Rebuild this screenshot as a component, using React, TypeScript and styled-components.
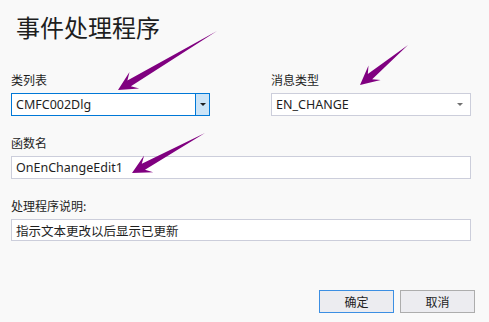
import { FC } from "react";
import styled, { createGlobalStyle } from "styled-components";

const GlobalStyle = createGlobalStyle`
  html, body {
    margin: 0;
    padding: 0;
    background-color: #f9f9f9;
  }
  body {
    font-family: "Noto Sans", "Noto Sans CJK SC", sans-serif;
    color: #1e1e1e;
  }
`;

const StyledDialog = styled.div`
  position: relative;
  width: 489px;
  height: 322px;
  box-sizing: border-box;
  padding: 11px 0 0 11px;
  overflow: hidden;
`;

const Title = styled.h1`
  margin: 0 0 29px 5px;
  font-family: "Noto Sans CJK SC", sans-serif;
  font-size: 24px;
  font-weight: 400;
  line-height: 32px;
  color: #1e1e1e;
`;

const FormGrid = styled.div`
  display: grid;
  grid-template-columns: 199px 200px;
  column-gap: 61px;
  row-gap: 19px;
  width: 460px;
`;

const Field = styled.div<{ $wide?: boolean }>`
  display: flex;
  flex-direction: column;
  gap: 5px;
  grid-column: ${(props) => (props.$wide ? "1 / -1" : "auto")};
`;

const Label = styled.label`
  font-family: "Noto Sans CJK SC", sans-serif;
  font-size: 12px;
  line-height: 16px;
  color: #1e1e1e;
`;

const Box = styled.div<{ $focused?: boolean; $height?: number }>`
  display: flex;
  align-items: stretch;
  height: ${(props) => props.$height ?? 23}px;
  box-sizing: border-box;
  border: 1px solid ${(props) => (props.$focused ? "#0078d7" : "#cccedb")};
  background-color: #ffffff;
`;

const Value = styled.span`
  flex: 1;
  display: flex;
  align-items: center;
  padding-left: 4px;
  font-family: "Noto Sans", "Noto Sans CJK SC", sans-serif;
  font-size: 12.5px;
  color: #1e1e1e;
  white-space: nowrap;
`;

const DropButton = styled.span<{ $active?: boolean }>`
  width: 13px;
  display: flex;
  align-items: center;
  justify-content: center;
  background-color: ${(props) => (props.$active ? "#cce4f7" : "transparent")};
  border-left: 1px solid ${(props) => (props.$active ? "#0078d7" : "transparent")};
  margin-right: ${(props) => (props.$active ? "0" : "4px")};
`;

const Caret = styled.span<{ $dark?: boolean }>`
  width: 0;
  height: 0;
  border-left: 3px solid transparent;
  border-right: 3px solid transparent;
  border-top: 3px solid ${(props) => (props.$dark ? "#1e1e1e" : "#717171")};
`;

const ButtonRow = styled.div`
  display: flex;
  justify-content: flex-end;
  gap: 6px;
  padding-right: 14px;
  margin-top: 49px;
`;

const Button = styled.button<{ $primary?: boolean }>`
  width: 75px;
  height: 23px;
  padding: 0;
  box-sizing: border-box;
  border: 1px solid ${(props) => (props.$primary ? "#3c8fe3" : "#adadad")};
  background-color: #ececf0;
  font-family: "Noto Sans CJK SC", sans-serif;
  font-size: 12px;
  color: #1e1e1e;
`;

const ArrowLayer = styled.svg`
  position: absolute;
  left: 0;
  top: 0;
  pointer-events: none;
`;

interface IArrowProps {
  from: [number, number];
  to: [number, number];
}

// tapered purple annotation arrow, tail is a point, head has barbs
const Arrow: FC<IArrowProps> = ({ from, to }) => {
  const dx = to[0] - from[0];
  const dy = to[1] - from[1];
  const len = Math.hypot(dx, dy);
  const ux = dx / len;
  const uy = dy / len;
  const nx = -uy;
  const ny = ux;
  const headLen = 13;
  const shaft = 3.4;
  const wing = 9.5;
  const back = 19;
  const base = [to[0] - ux * headLen, to[1] - uy * headLen];
  const wingBase = [to[0] - ux * back, to[1] - uy * back];
  const pts = [
    from,
    [base[0] + nx * shaft, base[1] + ny * shaft],
    [wingBase[0] + nx * wing, wingBase[1] + ny * wing],
    to,
    [wingBase[0] - nx * wing, wingBase[1] - ny * wing],
    [base[0] - nx * shaft, base[1] - ny * shaft],
  ]
    .map((p) => `${p[0].toFixed(1)},${p[1].toFixed(1)}`)
    .join(" ");

  return <polygon points={pts} fill="#800080" />;
};

export default function App() {
  return (
    <>
      <GlobalStyle />
      <StyledDialog>
        <Title>事件处理程序</Title>
        <FormGrid>
          <Field>
            <Label>类列表</Label>
            <Box $focused>
              <Value>CMFC002Dlg</Value>
              <DropButton $active>
                <Caret $dark />
              </DropButton>
            </Box>
          </Field>
          <Field>
            <Label>消息类型</Label>
            <Box>
              <Value>EN_CHANGE</Value>
              <DropButton>
                <Caret />
              </DropButton>
            </Box>
          </Field>
          <Field $wide>
            <Label>函数名</Label>
            <Box>
              <Value>OnEnChangeEdit1</Value>
            </Box>
          </Field>
          <Field $wide>
            <Label>处理程序说明:</Label>
            <Box $height={22}>
              <Value>指示文本更改以后显示已更新</Value>
            </Box>
          </Field>
        </FormGrid>
        <ButtonRow>
          <Button $primary>确定</Button>
          <Button>取消</Button>
        </ButtonRow>
        <ArrowLayer width="489" height="322" viewBox="0 0 489 322">
          <Arrow from={[217, 31]} to={[118, 90]} />
          <Arrow from={[408, 45]} to={[360, 85]} />
          <Arrow from={[205, 133]} to={[132, 173]} />
        </ArrowLayer>
      </StyledDialog>
    </>
  );
}
